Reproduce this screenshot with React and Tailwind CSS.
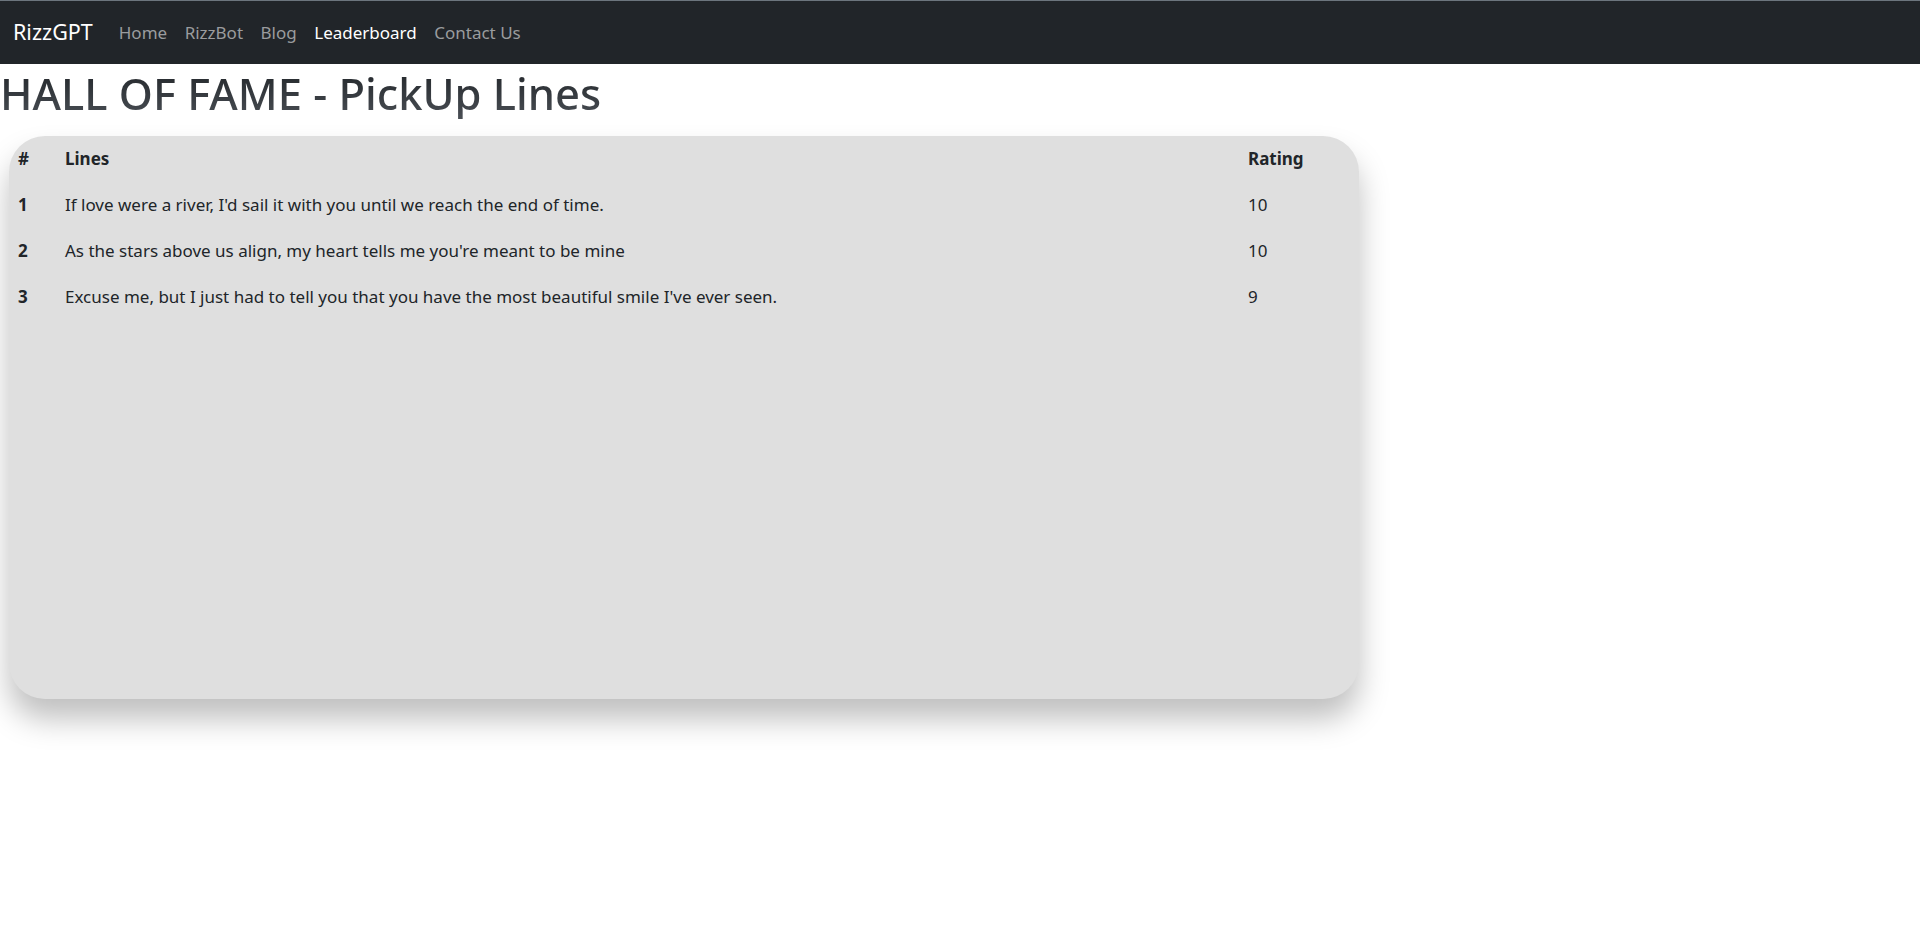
import React from 'react';

const links = [
  { label: 'Home', active: false },
  { label: 'RizzBot', active: false },
  { label: 'Blog', active: false },
  { label: 'Leaderboard', active: true },
  { label: 'Contact Us', active: false },
];

const lines = [
  { id: 1, text: "If love were a river, I'd sail it with you until we reach the end of time.", rating: 10 },
  { id: 2, text: "As the stars above us align, my heart tells me you're meant to be mine", rating: 10 },
  { id: 3, text: "Excuse me, but I just had to tell you that you have the most beautiful smile I've ever seen.", rating: 9 },
];

export default function App() {
  return (
    <div className="min-h-screen bg-white text-[#212529]" style={{ fontFamily: '"Noto Sans", "Open Sans", sans-serif' }}>
      <nav className="h-16 bg-[#212529] border-t border-[#6c757d] flex items-center px-[13px]">
        <span className="text-[21.5px] text-white mr-[26px]">RizzGPT</span>
        <div className="flex items-center gap-[17.5px]">
          {links.map((l) => (
            <a key={l.label} className={`text-[17px] ${l.active ? 'text-white' : 'text-[#9a9c9e]'}`}>{l.label}</a>
          ))}
        </div>
      </nav>

      <h1 className="text-[43.5px] leading-[1.2] font-medium mt-[3px] bg-gradient-to-b from-[#212529] to-[#4a4f55] bg-clip-text text-transparent w-fit">
        HALL OF FAME - PickUp Lines
      </h1>

      <div className="ml-[9px] mt-[17px] w-[1350px] h-[563px] bg-[#dfdfdf] rounded-[36px] shadow-[0_20px_30px_rgba(0,0,0,0.25)]">
        <table className="w-full text-[17px] border-collapse">
          <thead>
            <tr className="h-[46px]">
              <th className="text-left font-bold pl-[9px] w-[56px]">#</th>
              <th className="text-left font-bold">Lines</th>
              <th className="text-left font-bold w-[111px]">Rating</th>
            </tr>
          </thead>
          <tbody>
            {lines.map((r) => (
              <tr key={r.id} className="h-[46px]">
                <td className="pl-[9px] font-bold">{r.id}</td>
                <td>{r.text}</td>
                <td>{r.rating}</td>
              </tr>
            ))}
          </tbody>
        </table>
      </div>
    </div>
  );
}
